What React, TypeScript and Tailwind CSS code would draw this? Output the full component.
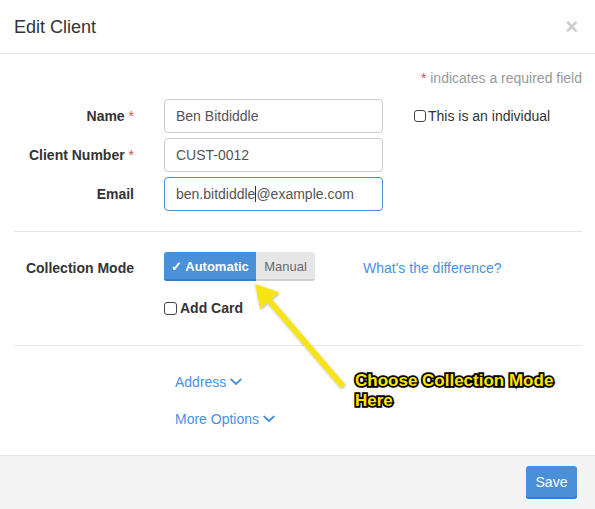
function Box() {
  return <span className="inline-block w-[12px] h-[12px] border border-[#444] rounded-[3px] bg-white shrink-0" />;
}

function Chevron() {
  return (
    <svg width="12" height="8" viewBox="0 0 12 8" fill="none" stroke="currentColor" strokeWidth="1.8" strokeLinecap="round" strokeLinejoin="round">
      <polyline points="1.2,1.5 6,6 10.8,1.5" />
    </svg>
  );
}

function Field({ label, required, children }: { label: string; required?: boolean; children: React.ReactNode }) {
  return (
    <div className="flex items-center h-[34px]">
      <div className="w-[120px] text-right text-[14px] font-bold text-[#333]">
        {label}
        {required && <span className="text-[#d9534f] font-normal"> *</span>}
      </div>
      {children}
    </div>
  );
}

export default function App() {
  return (
    <div className="relative w-[595px] h-[509px] bg-white flex flex-col font-['Liberation_Sans',Arial,sans-serif] text-[#333] overflow-hidden">
      {/* Header */}
      <div className="h-[54px] shrink-0 flex items-center justify-between pl-[14px] pr-[17px] border-b border-[#e5e5e5]">
        <h2 className="text-[18px] leading-[20px] text-[#333]">Edit Client</h2>
        <span className="text-[22px] leading-[20px] font-bold text-[#cdcdcd]">×</span>
      </div>

      {/* Body */}
      <div className="flex-1 pl-[14px] pr-[13px]">
        <div className="pt-[15px] text-right text-[14px] leading-[18px] text-[#999]">
          <span className="text-[#d9534f]">*</span> indicates a required field
        </div>

        <div className="mt-[12px] flex flex-col gap-[5px]">
          <Field label="Name" required>
            <div className="ml-[30px] w-[219px] h-[34px] border border-[#ccc] rounded-[4px] flex items-center pl-[11px] text-[14px] text-[#555]">
              Ben Bitdiddle
            </div>
            <div className="ml-[31px] flex items-center gap-[2px] text-[14px] text-[#333]">
              <Box />
              <span>This is an individual</span>
            </div>
          </Field>
          <Field label="Client Number" required>
            <div className="ml-[30px] w-[219px] h-[34px] border border-[#ccc] rounded-[4px] flex items-center pl-[11px] text-[14px] text-[#555]">
              CUST-0012
            </div>
          </Field>
          <Field label="Email">
            <div className="ml-[30px] w-[219px] h-[34px] border border-[#4a90d9] rounded-[4px] flex items-center pl-[11px] text-[14px] text-[#555]">
              ben.bitdiddle<span className="inline-block w-px h-[16px] bg-[#333]" />@example.com
            </div>
          </Field>
        </div>

        <div className="mt-[20px] border-t border-[#e5e5e5]" />

        <div className="mt-[20px] flex items-center">
          <div className="w-[120px] text-right text-[14px] font-bold pt-[4px]">Collection Mode</div>
          <div className="ml-[30px] flex h-[29px] rounded-[3px] overflow-hidden">
            <button className="w-[92px] bg-[#4a90d9] text-white text-[13px] font-bold shadow-[inset_0_-2px_0_#3b7cc2]">
              ✓ Automatic
            </button>
            <button className="w-[59px] bg-[#e6e6e6] text-[#6a6a6a] text-[13px] shadow-[inset_0_-2px_0_#cfcfcf]">
              Manual
            </button>
          </div>
          <a className="ml-[48px] pt-[4px] text-[14px] text-[#4a90e2]">What's the difference?</a>
        </div>

        <div className="mt-[19px] ml-[150px] h-[16px] flex items-center gap-[3px]">
          <span className="inline-block w-[13px] h-[13px] border border-[#444] rounded-[3px] bg-white" />
          <span className="text-[14px] font-bold">Add Card</span>
        </div>

        <div className="mt-[29px] border-t border-[#e5e5e5]" />

        <div className="mt-[26px] ml-[161px] flex flex-col gap-[17px] text-[14px] text-[#4a90e2]">
          <div className="h-[20px] flex items-center gap-[4px]">
            Address <Chevron />
          </div>
          <div className="h-[20px] flex items-center gap-[4px]">
            More Options <Chevron />
          </div>
        </div>
      </div>

      {/* Footer */}
      <div className="h-[54px] shrink-0 border-t border-[#e5e5e5] bg-[#f4f4f4] flex items-center justify-end pr-[18px]">
        <button className="w-[51px] h-[33px] rounded-[3px] bg-[#4a90d9] text-white text-[14px] shadow-[inset_0_-2px_0_#3b7cc2]">
          Save
        </button>
      </div>

      {/* Annotation overlay */}
      <svg className="absolute left-0 top-0 pointer-events-none" width="595" height="509">
        <defs>
          <filter id="sh" x="-20%" y="-20%" width="140%" height="140%">
            <feDropShadow dx="0.5" dy="1" stdDeviation="0.8" floodColor="#000" floodOpacity="0.35" />
          </filter>
        </defs>
        <polygon
          filter="url(#sh)"
          fill="#f7e416"
          points="255,284 279,292.3 271.6,299 345.2,384.6 340.8,388.2 267.2,302.4 260.2,309"
        />
      </svg>
      <div className="absolute left-[355px] top-[371px] text-[17px] leading-[20px] font-bold text-[#ffe600] [-webkit-text-stroke:3.5px_#000] [paint-order:stroke_fill] [text-shadow:0_0_3px_#000] pointer-events-none">
        Choose Collection Mode
        <br />
        Here
      </div>
    </div>
  );
}
